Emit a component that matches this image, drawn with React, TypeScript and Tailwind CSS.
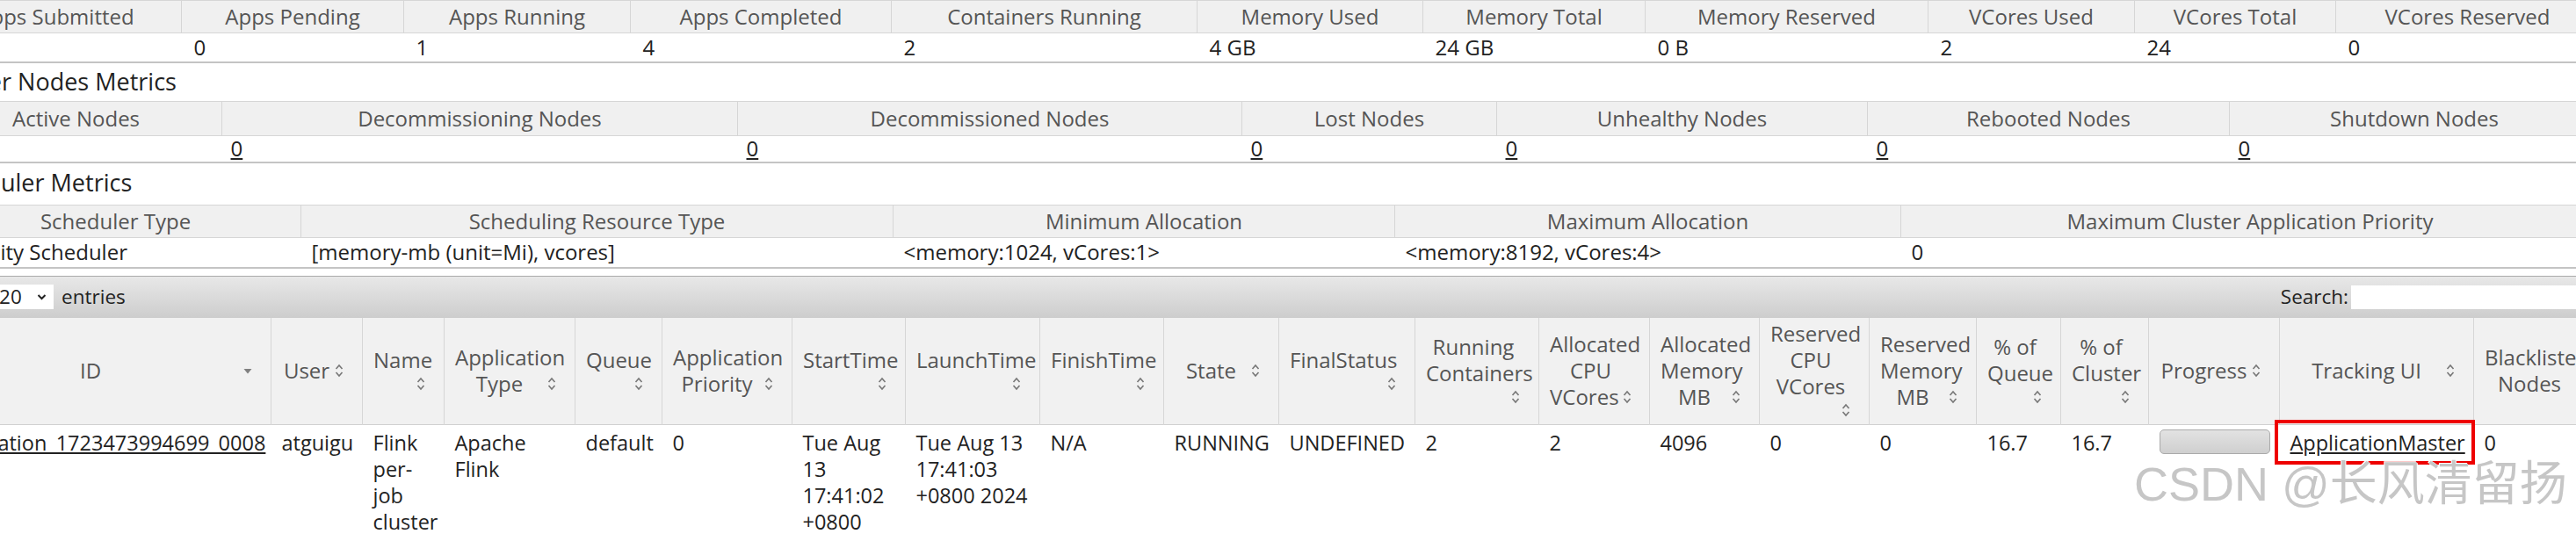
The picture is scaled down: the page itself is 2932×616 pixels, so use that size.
import React from 'react';

type MetricCol = { label: string; w: string; value: string; link?: boolean };

const clusterMetrics: MetricCol[] = [
  { label: 'Apps Submitted', w: 'w-[286px]', value: '5' },
  { label: 'Apps Pending', w: 'w-[253px]', value: '0' },
  { label: 'Apps Running', w: 'w-[258px]', value: '1' },
  { label: 'Apps Completed', w: 'w-[297px]', value: '4' },
  { label: 'Containers Running', w: 'w-[348px]', value: '2' },
  { label: 'Memory Used', w: 'w-[257px]', value: '4 GB' },
  { label: 'Memory Total', w: 'w-[253px]', value: '24 GB' },
  { label: 'Memory Reserved', w: 'w-[322px]', value: '0 B' },
  { label: 'VCores Used', w: 'w-[235px]', value: '2' },
  { label: 'VCores Total', w: 'w-[229px]', value: '24' },
  { label: 'VCores Reserved', w: 'w-[300px]', value: '0' },
];

const nodeMetrics: MetricCol[] = [
  { label: 'Active Nodes', w: 'w-[332px]', value: '3', link: true },
  { label: 'Decommissioning Nodes', w: 'w-[587px]', value: '0', link: true },
  { label: 'Decommissioned Nodes', w: 'w-[574px]', value: '0', link: true },
  { label: 'Lost Nodes', w: 'w-[290px]', value: '0', link: true },
  { label: 'Unhealthy Nodes', w: 'w-[422px]', value: '0', link: true },
  { label: 'Rebooted Nodes', w: 'w-[412px]', value: '0', link: true },
  { label: 'Shutdown Nodes', w: 'w-[421px]', value: '0', link: true },
];

const schedulerMetrics: MetricCol[] = [
  { label: 'Scheduler Type', w: 'w-[422px]', value: 'Capacity Scheduler' },
  { label: 'Scheduling Resource Type', w: 'w-[674px]', value: '[memory-mb (unit=Mi), vcores]' },
  { label: 'Minimum Allocation', w: 'w-[571px]', value: '<memory:1024, vCores:1>' },
  { label: 'Maximum Allocation', w: 'w-[576px]', value: '<memory:8192, vCores:4>' },
  { label: 'Maximum Cluster Application Priority', w: 'w-[795px]', value: '0' },
];

type Icon = 'both' | 'desc';
type AppCol = { lines: string[]; w: string; icon: Icon; ownLine?: boolean };

const appCols: AppCol[] = [
  { lines: ['ID'], w: 'w-[388px]', icon: 'desc' },
  { lines: ['User'], w: 'w-[104px]', icon: 'both' },
  { lines: ['Name'], w: 'w-[93px]', icon: 'both', ownLine: true },
  { lines: ['Application', 'Type'], w: 'w-[149px]', icon: 'both' },
  { lines: ['Queue'], w: 'w-[99px]', icon: 'both', ownLine: true },
  { lines: ['Application', 'Priority'], w: 'w-[148px]', icon: 'both' },
  { lines: ['StartTime'], w: 'w-[129px]', icon: 'both', ownLine: true },
  { lines: ['LaunchTime'], w: 'w-[153px]', icon: 'both', ownLine: true },
  { lines: ['FinishTime'], w: 'w-[141px]', icon: 'both', ownLine: true },
  { lines: ['State'], w: 'w-[131px]', icon: 'both' },
  { lines: ['FinalStatus'], w: 'w-[155px]', icon: 'both', ownLine: true },
  { lines: ['Running', 'Containers'], w: 'w-[141px]', icon: 'both', ownLine: true },
  { lines: ['Allocated', 'CPU', 'VCores'], w: 'w-[126px]', icon: 'both' },
  { lines: ['Allocated', 'Memory', 'MB'], w: 'w-[125px]', icon: 'both' },
  { lines: ['Reserved', 'CPU', 'VCores'], w: 'w-[125px]', icon: 'both', ownLine: true },
  { lines: ['Reserved', 'Memory', 'MB'], w: 'w-[122px]', icon: 'both' },
  { lines: ['% of', 'Queue'], w: 'w-[96px]', icon: 'both', ownLine: true },
  { lines: ['% of', 'Cluster'], w: 'w-[100px]', icon: 'both', ownLine: true },
  { lines: ['Progress'], w: 'w-[149px]', icon: 'both' },
  { lines: ['Tracking UI'], w: 'w-[221px]', icon: 'both' },
  { lines: ['Blacklisted', 'Nodes'], w: 'w-[150px]', icon: 'both' },
];

function SortIcon({ kind }: { kind: Icon }) {
  if (kind === 'desc') {
    return (
      <svg width="12" height="18" viewBox="0 0 12 18" className="shrink-0">
        <path d="M1.5 7 L10.5 7 L6 12.5 Z" fill="#808080" />
      </svg>
    );
  }
  return (
    <svg width="12" height="20" viewBox="0 0 12 20" className="shrink-0">
      <path d="M2.5 8 L6 4 L9.5 8" fill="none" stroke="#777" strokeWidth="1.6" />
      <path d="M2.5 12 L6 16 L9.5 12" fill="none" stroke="#777" strokeWidth="1.6" />
    </svg>
  );
}

function MetricsTable({ cols, headH, rowH, pad }: { cols: MetricCol[]; headH: string; rowH: string; pad: string }) {
  return (
    <table className="w-[3038px] table-fixed border-collapse text-[24px] leading-[28px]">
      <colgroup>
        {cols.map((c) => (
          <col key={c.label} className={c.w} />
        ))}
      </colgroup>
      <thead>
        <tr>
          {cols.map((c) => (
            <th
              key={c.label}
              className={`${headH} border border-[#d6d6d6] bg-[#f0f0f0] p-0 text-center font-normal whitespace-nowrap text-[#555]`}
            >
              {c.label}
            </th>
          ))}
        </tr>
      </thead>
      <tbody>
        <tr>
          {cols.map((c) => (
            <td key={c.label} className={`${rowH} ${pad} border-b-2 border-[#c4c4c4] bg-white py-0 text-left whitespace-nowrap text-[#222]`}>
              {c.link ? <span className="underline">{c.value}</span> : c.value}
            </td>
          ))}
        </tr>
      </tbody>
    </table>
  );
}

function AppHeader({ col }: { col: AppCol }) {
  const last = col.lines[col.lines.length - 1];
  const first = col.lines.slice(0, -1);
  return (
    <th className="border-x border-[#d6d6d6] bg-[#f1f1f1] py-0 pl-[12px] pr-[20px] align-middle font-normal text-[#555]">
      <div className="flex flex-col leading-[30px]">
        {first.map((l) => (
          <div key={l} className="whitespace-nowrap text-center">
            {l}
          </div>
        ))}
        {col.ownLine ? (
          <>
            <div className="whitespace-nowrap text-center">{last}</div>
            <div className="flex h-[24px] items-center justify-end">
              <SortIcon kind={col.icon} />
            </div>
          </>
        ) : (
          <div className="flex items-center">
            <span className="flex-1 whitespace-nowrap text-center">{last}</span>
            <span className="ml-[3px] flex">
              <SortIcon kind={col.icon} />
            </span>
          </div>
        )}
      </div>
    </th>
  );
}

export default function App() {
  const cell = 'pl-[12px] pr-[8px] pt-[5px] pb-0 align-top text-[23.5px] leading-[30px] text-[#222]';
  return (
    <div className="relative h-[616px] w-[2932px] overflow-hidden bg-white font-['Open_Sans','Noto_Sans',sans-serif] text-[22.5px]">
      <div className="-ml-[80px] w-[3060px]">
        <MetricsTable cols={clusterMetrics} headH="h-[37px]" rowH="h-[33px]" pad="pl-[14px]" />
        <h3 className="h-[43px] pl-[4px] text-[27px] leading-[42px] font-normal text-[#222]">Cluster Nodes Metrics</h3>
        <MetricsTable cols={nodeMetrics} headH="h-[39px]" rowH="h-[31px]" pad="pl-[10px]" />
        <h3 className="h-[47px] pl-[5px] text-[27px] leading-[44px] font-normal text-[#222]">Scheduler Metrics</h3>
        <MetricsTable cols={schedulerMetrics} headH="h-[37px]" rowH="h-[34px]" pad="pl-[12px]" />

        <div className="mt-[8px] flex h-[48px] w-[3038px] items-center justify-between border-t border-[#aaa] bg-gradient-to-b from-[#e8e8e8] to-[#cdcdcd] pl-[8px] text-[#222]">
          <div className="flex items-center">
            <span>Show</span>
            <span className="ml-[8px] flex h-[28px] w-[68px] items-center justify-between bg-white pl-[6px] pr-[8px]">
              <span>20</span>
              <svg width="11" height="8" viewBox="0 0 11 8">
                <path d="M1.5 2 L5.5 6 L9.5 2" fill="none" stroke="#222" strokeWidth="2" />
              </svg>
            </span>
            <span className="ml-[9px]">entries</span>
          </div>
          <div className="flex items-center">
            <span>Search:</span>
            <span className="ml-[3px] h-[27px] w-[282px] bg-white" />
          </div>
        </div>

        <table className="w-[3045px] table-fixed border-collapse text-[24px]">
          <colgroup>
            {appCols.map((c) => (
              <col key={c.lines.join(' ')} className={c.w} />
            ))}
          </colgroup>
          <thead>
            <tr className="h-[122px] border-b border-[#d0d0d0]">
              {appCols.map((c) => (
                <AppHeader key={c.lines.join(' ')} col={c} />
              ))}
            </tr>
          </thead>
          <tbody>
            <tr className="bg-white">
              <td className={cell}>
                <span className="underline">application_1723473994699_0008</span>
              </td>
              <td className={cell}>atguigu</td>
              <td className={cell}>Flink per-job cluster</td>
              <td className={cell}>Apache Flink</td>
              <td className={cell}>default</td>
              <td className={cell}>0</td>
              <td className={cell}>Tue Aug 13 17:41:02 +0800 2024</td>
              <td className={cell}>Tue Aug 13 17:41:03 +0800 2024</td>
              <td className={cell}>N/A</td>
              <td className={cell}>RUNNING</td>
              <td className={cell}>UNDEFINED</td>
              <td className={cell}>2</td>
              <td className={cell}>2</td>
              <td className={cell}>4096</td>
              <td className={cell}>0</td>
              <td className={cell}>0</td>
              <td className={cell}>16.7</td>
              <td className={cell}>16.7</td>
              <td className={cell}>
                <div className="h-[28px] w-[126px] rounded-[5px] border border-[#aaa] bg-gradient-to-b from-[#e2e2e2] to-[#cfcfcf]" />
              </td>
              <td className={`${cell} relative`}>
                <span className="underline">ApplicationMaster</span>
                <div className="absolute left-[-6px] top-[-6px] h-[51px] w-[228px] border-[4px] border-[#ee0000]" />
              </td>
              <td className={cell}>0</td>
            </tr>
          </tbody>
        </table>
      </div>

      <div className="absolute left-[2429px] top-[524px] whitespace-nowrap font-['Liberation_Sans','Noto_Sans_CJK_SC',sans-serif] text-[54px] leading-none text-[#c6c6c6] [text-shadow:1px_1px_0_#ffffff,-1px_-1px_0_#ffffff]">
        CSDN @长风清留扬
      </div>
    </div>
  );
}
